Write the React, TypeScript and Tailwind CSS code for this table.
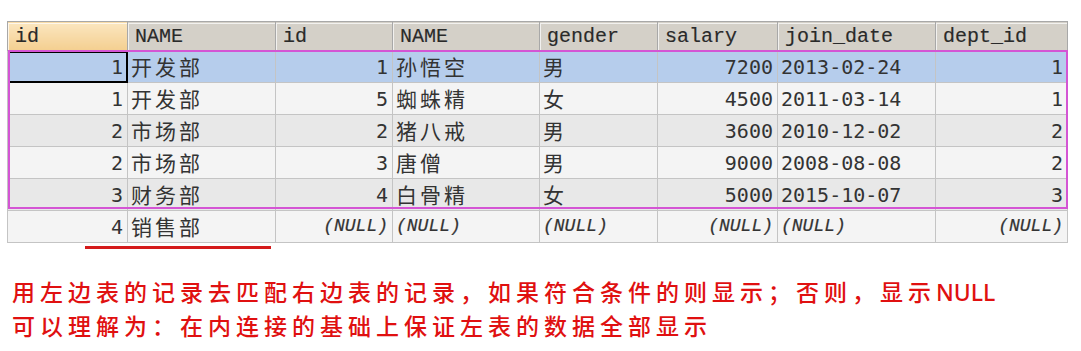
import React from "react";

const cols = [120, 148, 117, 147, 118, 120, 158, 132];
const heads = ["id", "NAME", "id", "NAME", "gender", "salary", "join_date", "dept_id"];
const align = ["r", "l", "r", "l", "l", "r", "l", "r"];

const rows: (string | null)[][] = [
  ["1", "开发部", "1", "孙悟空", "男", "7200", "2013-02-24", "1"],
  ["1", "开发部", "5", "蜘蛛精", "女", "4500", "2011-03-14", "1"],
  ["2", "市场部", "2", "猪八戒", "男", "3600", "2010-12-02", "2"],
  ["2", "市场部", "3", "唐僧", "男", "9000", "2008-08-08", "2"],
  ["3", "财务部", "4", "白骨精", "女", "5000", "2015-10-07", "3"],
  ["4", "销售部", null, null, null, null, null, null],
];

const rowBg = ["bg-[#b6cdec]", "bg-[#f4f4f4]", "bg-[#e8e8e8]", "bg-[#f4f4f4]", "bg-[#e8e8e8]", "bg-[#f4f4f4]"];

const isCJK = (s: string) => /[\u4e00-\u9fff]/.test(s);

export default function App() {
  return (
    <div className="w-[1081px] h-[351px] bg-white overflow-hidden">
      <div className="pt-[21px] pl-[7px]">
        <div className="relative w-[1060px]">
          <table className="table-fixed border-collapse w-[1060px] border border-[#a8a8a8]">
            <colgroup>
              {cols.map((w, i) => (
                <col key={i} style={{ width: w }} />
              ))}
            </colgroup>
            <thead>
              <tr className="h-[29px]">
                {heads.map((h, i) => (
                  <th
                    key={i}
                    className={`p-0 border border-[#a8a8a8] text-left font-normal ${
                      i === 0 ? "bg-[linear-gradient(#fbe6c0,#f4cf90)]" : "bg-[#d4d0c8]"
                    }`}
                  >
                    <div className="h-[27px] flex items-center pl-[6px] border-t border-l border-white/70 text-[20px] text-[#2a2a2a] font-['Liberation_Mono',monospace] [-webkit-text-stroke:0.15px_#2a2a2a]">
                      {h}
                    </div>
                  </th>
                ))}
              </tr>
            </thead>
            <tbody>
              {rows.map((r, ri) => (
                <tr key={ri} className={`h-[32px] ${rowBg[ri]}`}>
                  {r.map((c, ci) => {
                    const right = align[ci] === "r";
                    return (
                      <td key={ci} className="p-0 border border-[#c4c4c4]">
                        <div
                          className={`h-[31px] flex items-center ${
                            right ? "justify-end pr-[4px]" : "justify-start pl-[3px]"
                          } overflow-hidden whitespace-nowrap`}
                        >
                          {c === null ? (
                            <span className="text-[18px] italic text-[#333] font-['Liberation_Mono',monospace] [-webkit-text-stroke:0.2px_#333]">
                              (NULL)
                            </span>
                          ) : isCJK(c) ? (
                            <span className="text-[21px] tracking-[3px] text-[#333] font-['Noto_Sans_CJK_SC',sans-serif]">
                              {c}
                            </span>
                          ) : (
                            <span className="text-[20px] text-[#333] font-['DejaVu_Sans_Mono',monospace]">
                              {c}
                            </span>
                          )}
                        </div>
                      </td>
                    );
                  })}
                </tr>
              ))}
            </tbody>
          </table>
          <div className="absolute left-[1px] top-[30px] w-[120px] h-[32px] border-2 border-black pointer-events-none" />
          <div className="absolute left-[1px] top-[29px] w-[1060px] h-[159px] border-2 border-[#d455d4] pointer-events-none" />
        </div>
        <div className="ml-[78px] mt-[3px] w-[186px] h-[3px] bg-[#d41a1a]" />
      </div>
      <div className="mt-[26px] pl-[12px] text-[#e01010] text-[23px] leading-[33px] font-medium font-['Noto_Sans_CJK_SC',sans-serif]">
        <div className="whitespace-nowrap">
          <span className="tracking-[5px]">用左边表的记录去匹配右边表的记录，如果符合条件的则显示；否则，显示</span>
          <span className="font-['Noto_Sans',sans-serif]">NULL</span>
        </div>
        <div className="whitespace-nowrap tracking-[5px]">可以理解为：在内连接的基础上保证左表的数据全部显示</div>
      </div>
    </div>
  );
}
